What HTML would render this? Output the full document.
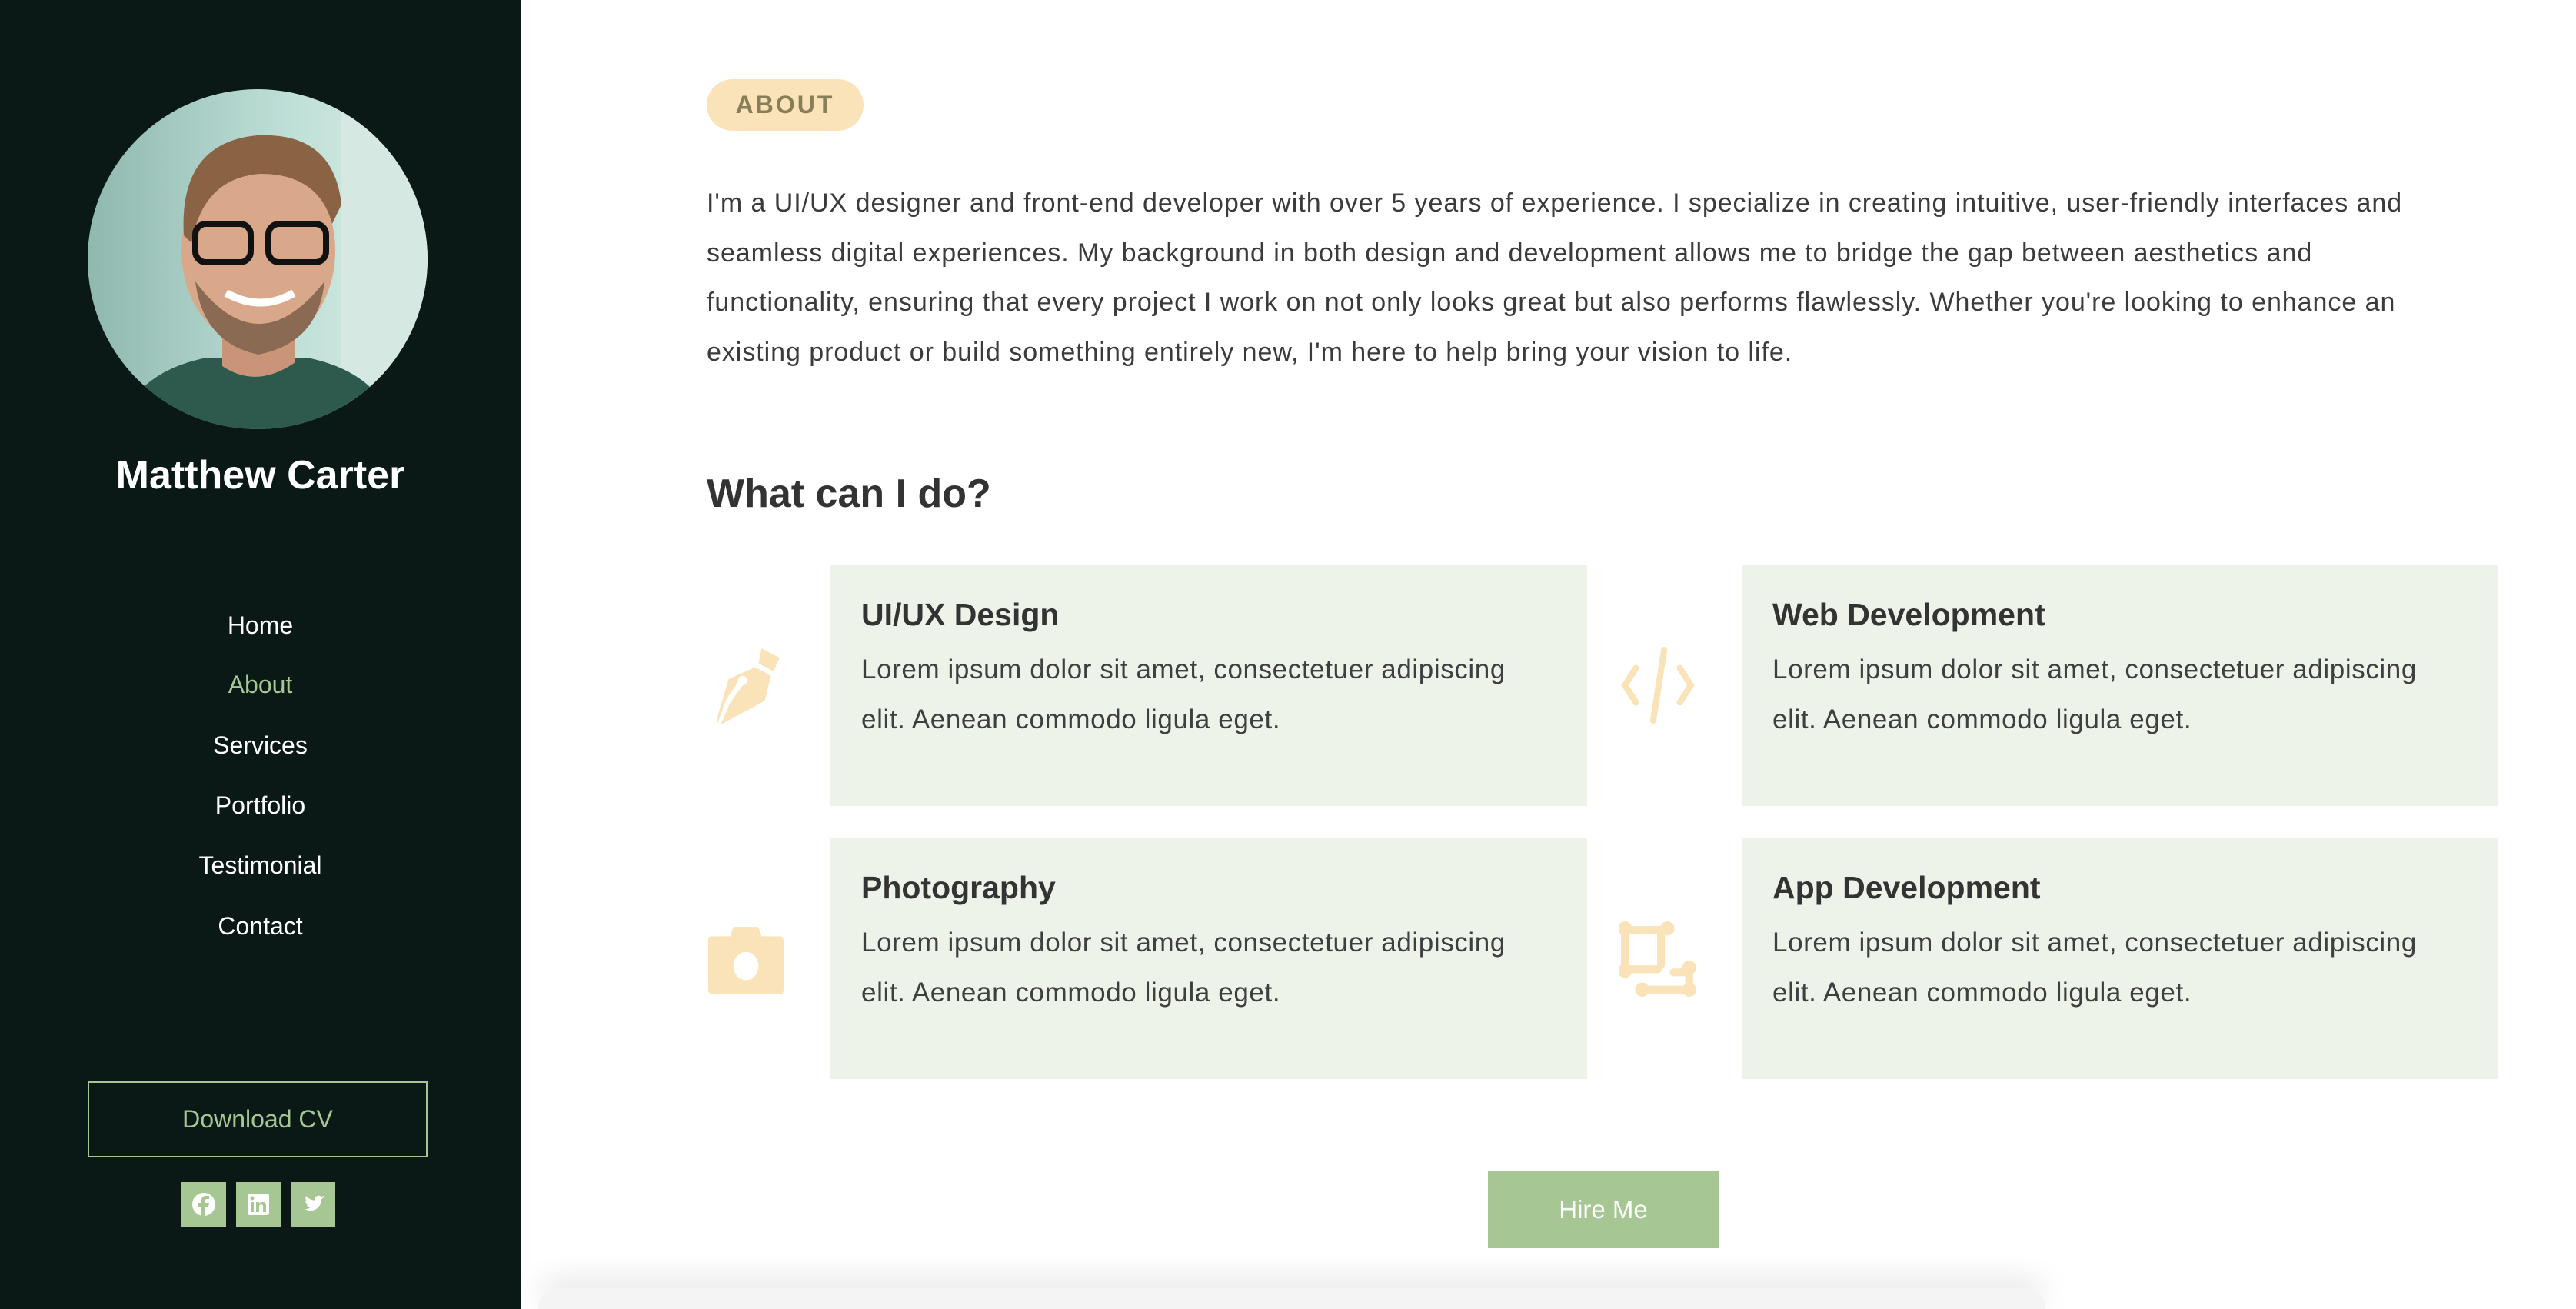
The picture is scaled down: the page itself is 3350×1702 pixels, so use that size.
<!DOCTYPE html>
<html style="overflow:hidden;width:3350px;height:1702px"><head><meta charset="utf-8"><style>
*{margin:0;padding:0;box-sizing:border-box}
body{width:3350px;height:1702px;overflow:hidden;background:#fff;font-family:"Liberation Sans",Arial,sans-serif;position:relative}
.side{position:absolute;left:0;top:0;width:677px;height:1702px;background:#0b1916}
.av{position:absolute;left:114px;top:116px;width:442px;height:442px;border-radius:50%;overflow:hidden;background:linear-gradient(90deg,#8fb8ae,#bfe0d8 60%,#d8ebe6)}
.name{position:absolute;left:0;width:677px;top:588px;text-align:center;color:#fff;font-weight:bold;font-size:52px}
.nav{position:absolute;left:0;width:677px;text-align:center;color:#fff;font-size:32px}
.dl{position:absolute;left:114px;top:1406px;width:442px;height:99px;border:2px solid #a6c794;color:#a6c794;font-size:32px;text-align:center;line-height:95px}
.soc{position:absolute;top:1537px;width:58px;height:58px;background:#a6c794}
.pill{position:absolute;left:919px;top:103px;width:204px;height:67px;border-radius:34px;background:#fae3b8;color:#8a7e58;font-weight:bold;font-size:32px;letter-spacing:3px;text-align:center;line-height:67px}
.para{position:absolute;left:919px;top:232px;font-size:34px;line-height:64.5px;color:#3b3b3b;white-space:nowrap;letter-spacing:0.95px}
h2{position:absolute;left:919px;top:612px;font-size:52px;color:#333;font-weight:bold}
.card{position:absolute;width:984px;height:314px;background:#edf3e9;padding:40px 40px}
.card h3{font-size:41px;color:#333;font-weight:bold;line-height:50px;margin-bottom:14px}
.card p{font-size:35px;line-height:65px;color:#3f3f3f;white-space:nowrap;letter-spacing:0.6px}
.ic{position:absolute;width:102px;height:102px}
.hire{position:absolute;left:1935px;top:1522px;width:300px;height:101px;background:#a6c794;color:#fff;font-size:33px;text-align:center;line-height:101px}
.shadow{position:absolute;left:700px;top:1675px;width:1960px;height:27px;border-radius:30px 30px 0 0;box-shadow:0 -10px 40px rgba(0,0,0,.12);background:#f4f4f4}
</style></head><body>
<div class="side">
 <div class="av">
  <svg width="442" height="442" viewBox="0 0 442 442">
   <rect x="330" y="0" width="112" height="442" fill="#d6e8e2"/>
   <path d="M40 442 Q60 370 150 350 L290 350 Q380 370 400 442Z" fill="#2e5a4e"/>
   <path d="M175 300 L175 360 Q220 390 270 355 L270 300Z" fill="#c99478"/>
   <ellipse cx="222" cy="210" rx="100" ry="125" fill="#d9a88a"/>
   <path d="M125 190 Q118 70 220 60 Q320 55 330 150 L318 175 Q300 110 225 110 Q150 115 135 200Z" fill="#8a6345"/>
   <path d="M140 250 Q222 360 308 250 Q300 330 222 345 Q150 330 140 250Z" fill="#8a6a52"/>
   <rect x="140" y="175" width="72" height="50" rx="14" fill="none" stroke="#111" stroke-width="8"/>
   <rect x="235" y="175" width="75" height="50" rx="14" fill="none" stroke="#111" stroke-width="8"/>
   <path d="M180 265 Q225 290 268 265" stroke="#fff" stroke-width="10" fill="none"/>
  </svg>
 </div>
 <div class="name">Matthew Carter</div>
 <div class="nav" style="top:795px">Home</div>
 <div class="nav" style="top:872px;color:#a6c794">About</div>
 <div class="nav" style="top:951px">Services</div>
 <div class="nav" style="top:1029px">Portfolio</div>
 <div class="nav" style="top:1107px">Testimonial</div>
 <div class="nav" style="top:1186px">Contact</div>
 <div class="dl">Download CV</div>
 <div class="soc" style="left:236px"><svg width="58" height="58"><circle cx="29" cy="29" r="15" fill="#fff"/><path d="M31 44V32h4l1-5h-5v-3c0-2 1-2 3-2h2v-4h-4c-4 0-6 2-6 6v3h-4v5h4v12z" fill="#a6c794"/></svg></div>
 <div class="soc" style="left:307px"><svg width="58" height="58"><rect x="15" y="15" width="28" height="28" rx="3" fill="#fff"/><rect x="19" y="26" width="4" height="13" fill="#a6c794"/><circle cx="21" cy="21" r="2.5" fill="#a6c794"/><path d="M26 26h4v2c1-2 3-2 5-2 3 0 4 2 4 5v8h-4v-7c0-2-1-3-2-3s-3 1-3 3v7h-4z" fill="#a6c794"/></svg></div>
 <div class="soc" style="left:378px"><svg width="58" height="58"><path d="M44 20c-1 .5-2 .8-3 1 1-.7 2-1.7 2-3-1 .6-2 1-3 1.2a5 5 0 0 0-8.5 4.5C27 23.5 23 21.5 20 18c-1.5 2.5-.5 5.5 1.5 7-1 0-1.700-.3-2.300-.6 0 2.5 1.7 4.5 4 5-.8.2-1.6.2-2.3.1.6 2 2.5 3.4 4.7 3.5A10 10 0 0 1 18 35c2.2 1.4 5 2.2 7.6 2.2 9.3 0 14.5-7.8 14.3-14.8 1-.7 2-1.6 2.500-2.500z" fill="#fff"/></svg></div>
</div>

<div class="pill">ABOUT</div>
<div class="para">I'm a UI/UX designer and front-end developer with over 5 years of experience. I specialize in creating intuitive, user-friendly interfaces and<br>seamless digital experiences. My background in both design and development allows me to bridge the gap between aesthetics and<br>functionality, ensuring that every project I work on not only looks great but also performs flawlessly. Whether you're looking to enhance an<br>existing product or build something entirely new, I'm here to help bring your vision to life.</div>
<h2>What can I do?</h2>

<svg class="ic" style="left:919px;top:840px" viewBox="0 0 100 100"><path d="M70 3 L93 15 L85 32 L66 22Z" fill="#fae3b8"/><path d="M62 27 L82 38 L74 70 L18 100 L30 72 L46 50 A6 6 0 1 0 40 46 L25 68 L14 98 L12 96 L28 42Z" fill="#fae3b8"/></svg>
<svg class="ic" style="left:2105px;top:840px" viewBox="0 0 100 100"><path d="M22 28 L8 50 L22 72 M78 28 L92 50 L78 72 M58 5 L44 95" stroke="#fae3b8" stroke-width="8" stroke-linecap="round" fill="none"/></svg>
<svg class="ic" style="left:919px;top:1197px" viewBox="0 0 100 100"><path d="M6 20 H30 L34 8 H66 L70 20 H94 Q98 20 98 26 V88 Q98 94 92 94 H8 Q2 94 2 88 V26 Q2 20 6 20Z" fill="#fae3b8"/><ellipse cx="50" cy="58" rx="16" ry="18" fill="#fff"/></svg>
<svg class="ic" style="left:2105px;top:1197px" viewBox="0 0 100 100"><g stroke="#fae3b8" stroke-width="10" fill="none" stroke-linecap="round"><path d="M8 12 H66 M8 12 V62 M8 62 H50 M54 18 V56 M32 88 H92 M90 58 V88 M70 66 H90"/></g><g fill="#fae3b8"><circle cx="8" cy="10" r="9"/><circle cx="62" cy="10" r="9"/><circle cx="8" cy="64" r="9"/><circle cx="90" cy="60" r="9"/><circle cx="30" cy="88" r="9"/><circle cx="90" cy="88" r="9"/></g></svg>

<div class="card" style="left:1080px;top:734px"><h3>UI/UX Design</h3><p>Lorem ipsum dolor sit amet, consectetuer adipiscing<br>elit. Aenean commodo ligula eget.</p></div>
<div class="card" style="left:2265px;top:734px"><h3>Web Development</h3><p>Lorem ipsum dolor sit amet, consectetuer adipiscing<br>elit. Aenean commodo ligula eget.</p></div>
<div class="card" style="left:1080px;top:1089px"><h3>Photography</h3><p>Lorem ipsum dolor sit amet, consectetuer adipiscing<br>elit. Aenean commodo ligula eget.</p></div>
<div class="card" style="left:2265px;top:1089px"><h3>App Development</h3><p>Lorem ipsum dolor sit amet, consectetuer adipiscing<br>elit. Aenean commodo ligula eget.</p></div>

<div class="hire">Hire Me</div>
<div class="shadow"></div>
</body></html>
